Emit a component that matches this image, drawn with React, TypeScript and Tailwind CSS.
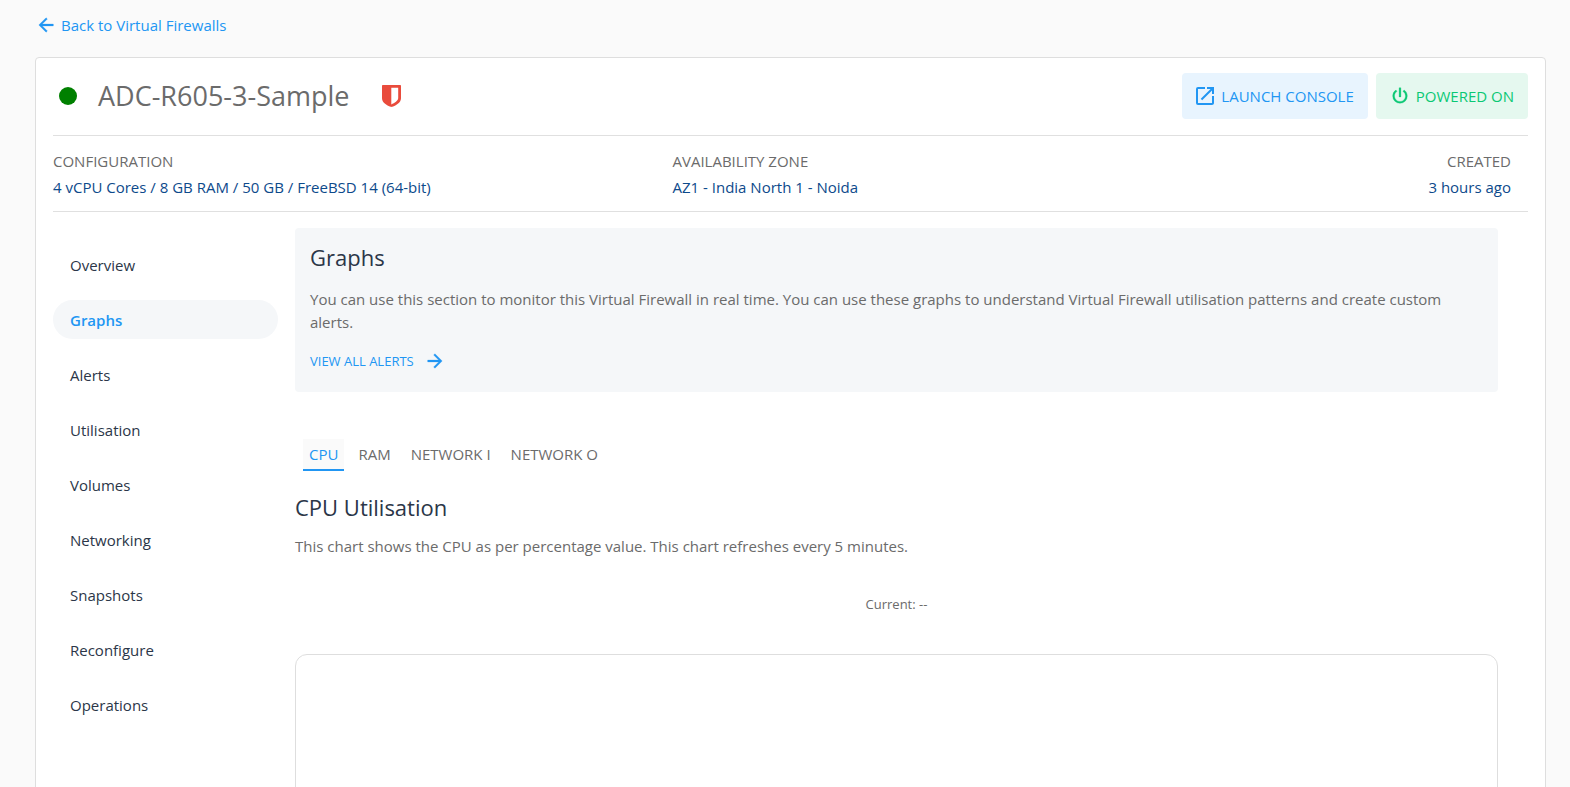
import type { ReactNode } from "react";
import { MdOpenInNew } from "react-icons/md";

const menu = [
  "Overview",
  "Graphs",
  "Alerts",
  "Utilisation",
  "Volumes",
  "Networking",
  "Snapshots",
  "Reconfigure",
  "Operations",
];

const tabs = ["CPU", "RAM", "NETWORK I", "NETWORK O"];

const arrowLeft = "M20 11v2H8l5.5 5.5-1.42 1.42L4.16 12l7.92-7.92L13.5 5.5 8 11z";
const arrowRight = "M4 11v2h12l-5.5 5.5 1.42 1.42L19.84 12l-7.92-7.92L10.5 5.5 16 11z";
const power =
  "M16.56 5.44l-1.45 1.45A6 6 0 0 1 18 12a6 6 0 0 1-12 0c0-2.17 1.16-4.06 2.88-5.12L7.44 5.44A7.96 7.96 0 0 0 4 12a8 8 0 0 0 16 0c0-2.72-1.36-5.12-3.44-6.56M13 3h-2v10h2z";

function Icon({ path }: { path: string }) {
  return (
    <svg
      viewBox="0 0 24 24"
      fill="currentColor"
      stroke="currentColor"
      strokeWidth="0.3"
      className="size-[22px] shrink-0"
      aria-hidden="true"
    >
      <path d={path} />
    </svg>
  );
}

function Shield() {
  return (
    <svg viewBox="0 0 19 22" className="ml-[33px] h-[22px] w-[19px]" aria-hidden="true">
      <path
        fill="#e94b3c"
        fillRule="evenodd"
        d="M.8 0h17.4c.5 0 .8.3.8.8v12.4c0 4.2-4.6 7-8.7 8.6-.5.2-1.100.2-1.600 0C4.600 20.200 0 17.400 0 13.200V.8C0 .3.3 0 .8 0zM9.300 2.800v16.600c3.200-1.500 6.900-3.600 6.900-6.400V2.800z"
      />
    </svg>
  );
}

function Fact({ label, children, className }: { label: string; children: ReactNode; className: string }) {
  return (
    <div className={className}>
      <dt>{label}</dt>
      <dd className="text-[#0d4a8b]">{children}</dd>
    </div>
  );
}

export default function App() {
  return (
    <div className="h-screen overflow-hidden bg-[#fafafa] pr-6 pl-[35px] font-['Open_Sans',sans-serif] text-[15px] leading-[26px] text-[#6b6b6b]">
      <a href="#firewalls" className="flex h-[57px] w-fit items-center gap-1 pb-2 text-[#2196f3]">
        <Icon path={arrowLeft} />
        Back to Virtual Firewalls
      </a>

      <main className="min-h-screen rounded border border-[#dedede] bg-white px-[17px]">
        <header className="flex items-center justify-between border-b border-[#e0e0e0] pt-[15px] pb-4">
          <div className="flex items-center pl-[6px]">
            <span className="size-[18px] rounded-full bg-[#008000]" role="img" aria-label="Running" />
            <h1 className="ml-[21px] text-[27px] leading-9">ADC-R605-3-Sample</h1>
            <Shield />
          </div>
          <div className="flex gap-2">
            <button type="button" className="flex h-[46px] items-center gap-1 rounded bg-[#e8f4fe] pr-[14px] pl-[11px] text-[#2196f3]">
              <MdOpenInNew className="size-6" aria-hidden="true" />
              LAUNCH CONSOLE
            </button>
            <button type="button" className="flex h-[46px] items-center gap-[5px] rounded bg-[#e5f8ef] pr-[14px] pl-[13px] text-[#0ac874]">
              <Icon path={power} />
              POWERED ON
            </button>
          </div>
        </header>

        <dl className="flex border-b border-[#e0e0e0] pt-3 pb-[11px]">
          <Fact label="CONFIGURATION" className="w-[42%]">4 vCPU Cores / 8 GB RAM / 50 GB / FreeBSD 14 (64-bit)</Fact>
          <Fact label="AVAILABILITY ZONE" className="flex-1">AZ1 - India North 1 - Noida</Fact>
          <Fact label="CREATED" className="pr-[17px] text-right">3 hours ago</Fact>
        </dl>

        <div className="flex gap-[17px] pt-4 pr-[30px]">
          <nav className="flex w-[225px] shrink-0 flex-col gap-4 pt-[17px]">
            {menu.map((item) => (
              <a
                key={item}
                href={"#" + item.toLowerCase()}
                className={
                  item === "Graphs"
                    ? "flex h-[39px] items-center rounded-full bg-[#f5f7f9] px-[17px] font-semibold text-[#2196f3]"
                    : "flex h-[39px] items-center rounded-full px-[17px] text-[#2b3648]"
                }
              >
                {item}
              </a>
            ))}
          </nav>

          <div className="min-w-0 flex-1">
            <section className="rounded bg-[#f5f7f9] px-[15px] pt-[13px] pb-[18px]">
              <h2 className="text-[22px] leading-8 text-[#2b3648]">Graphs</h2>
              <p className="mt-[15px] leading-[23px]">
                You can use this section to monitor this Virtual Firewall in real time. You can use these graphs to
                understand Virtual Firewall utilisation patterns and create custom alerts.
              </p>
              <a href="#alerts" className="mt-[14px] flex w-fit items-center gap-[10px] text-[13px] text-[#2196f3]">
                VIEW ALL ALERTS
                <Icon path={arrowRight} />
              </a>
            </section>

            <div role="tablist" className="mt-[47px] flex gap-2 pl-2">
              {tabs.map((tab) => (
                <button
                  key={tab}
                  type="button"
                  role="tab"
                  aria-selected={tab === "CPU"}
                  className={
                    tab === "CPU"
                      ? "h-8 border-b-2 border-[#2196f3] bg-[#fafafa] px-[6px] text-[#2196f3]"
                      : "h-8 border-b-2 border-transparent px-[6px]"
                  }
                >
                  {tab}
                </button>
              ))}
            </div>

            <h2 className="mt-5 text-[22px] leading-8 text-[#2b3648]">CPU Utilisation</h2>
            <p className="mt-[10px]">This chart shows the CPU as per percentage value. This chart refreshes every 5 minutes.</p>
            <p className="mt-8 text-center text-[13px]">Current: --</p>
            <div className="mt-[37px] h-[400px] rounded-xl border border-[#dedede]" />
          </div>
        </div>
      </main>
    </div>
  );
}
